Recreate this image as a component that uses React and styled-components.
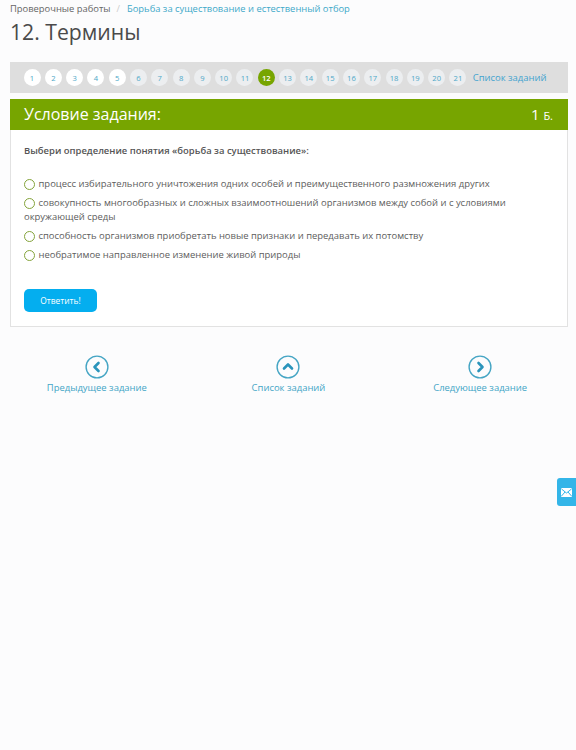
import React from 'react'
import styled, { createGlobalStyle } from 'styled-components'

const GlobalStyle = createGlobalStyle`
    html, body {
        margin: 0;
        padding: 0;
        background: #fcfcfd;
    }
    body {
        font-family: "Open Sans", sans-serif;
        color: #555;
    }
`

const Page = styled.div`
    position: relative;
    width: 576px;
    height: 750px;
    overflow: hidden;
    box-sizing: border-box;
    padding: 0 8px 0 10px;
`
const Breadcrumbs = styled.div`
    display: flex;
    align-items: center;
    height: 17px;
    font-size: 9.4px;
    color: #666;
`
const Slash = styled.span`
    margin: 0 7px 0 6px;
    color: #ccc;
`
const CrumbLink = styled.span`
    color: #3ea9c9;
`
const Title = styled.h1`
    margin: 0;
    height: 45px;
    font-size: 21.2px;
    font-weight: 400;
    line-height: 30px;
    color: #4a4a4a;
`
const TaskBar = styled.div`
    display: flex;
    align-items: center;
    height: 31px;
    padding-left: 13.5px;
    background: #dedede;
`
const Pill = styled.span`
    flex: none;
    display: flex;
    align-items: center;
    justify-content: center;
    width: 17px;
    height: 17px;
    margin-right: 4.3px;
    border-radius: 50%;
    font-size: 7.6px;
    background: ${props => props.$active ? '#77a500' : props.$done ? '#fff' : '#eceef0'};
    color: ${props => props.$active ? '#fff' : '#4ea8c8'};
    font-weight: ${props => props.$active ? 600 : 400};
`
const ListLink = styled.span`
    margin-left: 2px;
    font-size: 9.45px;
    color: #3fa3cf;
`
const Card = styled.div`
    margin-top: 6px;
    height: 228px;
    background: #fff;
    border: 1px solid #e2e2e2;
    border-top: 0;
    box-sizing: border-box;
`
const CardHeader = styled.div`
    display: flex;
    align-items: center;
    justify-content: space-between;
    height: 31px;
    margin: 0 -1px;
    padding: 0 15px 2px 14px;
    box-sizing: border-box;
    background: #77a500;
    color: #fff;
    font-size: 16px;
`
const Points = styled.span`
    font-size: 15px;
    small {
        font-size: 11px;
    }
`
const CardBody = styled.div`
    padding: 14px 13px 0;
`
const Question = styled.div`
    font-size: 9.45px;
    font-weight: 600;
    line-height: 14px;
    color: #555;
    margin-bottom: 16.5px;
`
const Answer = styled.div`
    font-size: 9.45px;
    line-height: 13.5px;
    color: #5c5c5c;
    padding: 2.8px 0 2.7px;
`
const Radio = styled.span`
    display: inline-block;
    width: 9px;
    height: 9px;
    margin-right: 3.5px;
    border: 1.6px solid #84a33a;
    border-radius: 50%;
    vertical-align: -3px;
`
const AnswerButton = styled.div`
    display: flex;
    align-items: center;
    justify-content: center;
    width: 73px;
    height: 23px;
    margin-top: 25px;
    border-radius: 5px;
    background: #04aeef;
    color: #fff;
    font-size: 8.4px;
`
const NavRow = styled.div`
    display: grid;
    grid-template-columns: repeat(3, 1fr);
    margin: 28px -8px 0 -10px;
    padding-left: 1px;
`
const NavItem = styled.div`
    display: flex;
    flex-direction: column;
    align-items: center;
    font-size: 9.45px;
    color: #3fa5c6;
    gap: 2px;
    line-height: 14px;
`
const FeedbackTab = styled.div`
    position: absolute;
    right: 0;
    top: 478px;
    display: flex;
    align-items: center;
    justify-content: center;
    width: 19px;
    height: 28px;
    border-radius: 3px 0 0 3px;
    background: #33b5e8;
`

const NavIcon = ({ d }) => (
    <svg width="24" height="24" viewBox="0 0 24 24" fill="none">
        <circle cx="12" cy="12" r="10.9" stroke="#45a5c4" strokeWidth="1.4" />
        <path d={d} stroke="#2a94bb" strokeWidth="2.6" strokeLinecap="round" strokeLinejoin="round" />
    </svg>
)

const answers = [
    'процесс избирательного уничтожения одних особей и преимущественного размножения других',
    'совокупность многообразных и сложных взаимоотношений организмов между собой и с условиями окружающей среды',
    'способность организмов приобретать новые признаки и передавать их потомству',
    'необратимое направленное изменение живой природы',
]

const tasks = Array.from({ length: 21 }, (_, i) => i + 1)

export default function App() {
    return (
        <Page>
            <GlobalStyle />
            <Breadcrumbs>
                Проверочные работы
                <Slash>/</Slash>
                <CrumbLink>Борьба за существование и естественный отбор</CrumbLink>
            </Breadcrumbs>
            <Title>12. Термины</Title>
            <TaskBar>
                {tasks.map(n => (
                    <Pill key={n} $done={n < 6} $active={n === 12}>{n}</Pill>
                ))}
                <ListLink>Список заданий</ListLink>
            </TaskBar>
            <Card>
                <CardHeader>
                    <span>Условие задания:</span>
                    <Points>1 <small>Б.</small></Points>
                </CardHeader>
                <CardBody>
                    <Question>Выбери определение понятия «борьба за существование»:</Question>
                    {answers.map((text, i) => (
                        <Answer key={i}>
                            <Radio />
                            {text}
                        </Answer>
                    ))}
                    <AnswerButton>Ответить!</AnswerButton>
                </CardBody>
            </Card>
            <NavRow>
                <NavItem>
                    <NavIcon d="M13.5 8 L9.5 12 L13.5 16" />
                    Предыдущее задание
                </NavItem>
                <NavItem>
                    <NavIcon d="M8 13.5 L12 9.5 L16 13.5" />
                    Список заданий
                </NavItem>
                <NavItem>
                    <NavIcon d="M10.5 8 L14.5 12 L10.5 16" />
                    Следующее задание
                </NavItem>
            </NavRow>
            <FeedbackTab>
                <svg width="11" height="9" viewBox="0 0 11 9">
                    <rect width="11" height="9" rx="1" fill="#fff" />
                    <path d="M0.5 1 L5.5 5 L10.5 1 M0.5 8 L4 4 M10.5 8 L7 4" stroke="#33b5e8" strokeWidth="1" fill="none" />
                </svg>
            </FeedbackTab>
        </Page>
    )
}
